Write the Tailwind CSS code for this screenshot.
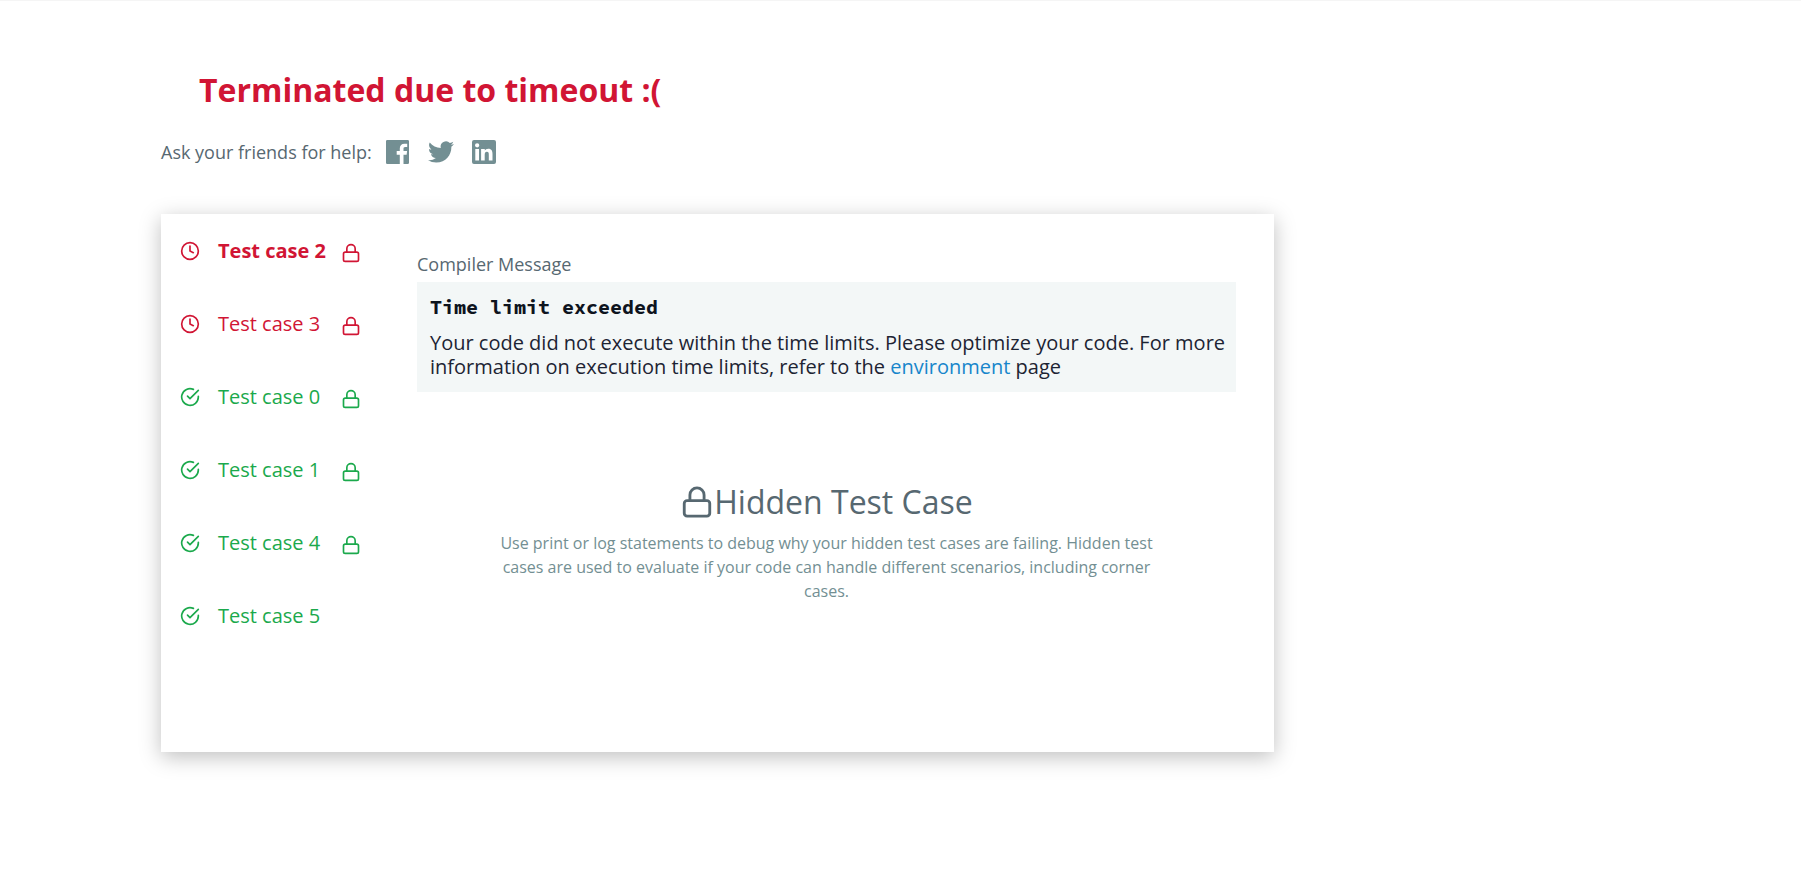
<!DOCTYPE html>
<html lang="en">
<head>
<meta charset="utf-8">
<meta name="viewport" content="width=device-width, initial-scale=1">
<title>Submission result</title>
<script src="https://cdn.jsdelivr.net/npm/@tailwindcss/browser@4"></script>
</head>
<body class="min-h-screen border-t border-[#f5f5f5] bg-white font-['Open_Sans','Noto_Sans',sans-serif] text-xl text-[#1d2433]">
<svg class="hidden" aria-hidden="true">
  <symbol id="clock" viewBox="0 0 24 24"><circle cx="12" cy="12" r="10"/><path d="M12 6v6l4 2"/></symbol>
  <symbol id="check" viewBox="0 0 24 24"><path d="M22 11.08V12a10 10 0 1 1-5.93-9.14"/><path d="M22 4 12 14.01l-3-3"/></symbol>
  <symbol id="lock" viewBox="0 0 24 24"><rect x="3" y="11" width="18" height="11" rx="2"/><path d="M7 11V7a5 5 0 0 1 10 0v4"/></symbol>
</svg>
<main class="max-w-[1274px] pl-[161px] pt-16">
  <h1 class="pl-[38px] text-[32px] leading-[50px] font-bold text-[#d11534]">Terminated due to timeout :(</h1>
  <div class="mt-[21px] flex h-8 items-center text-lg text-[#576871]">
    <span>Ask your friends for help:</span>
    <div class="ml-[14px] flex items-center gap-[18px] text-[#738f93]">
      <a href="#" aria-label="Share on Facebook"><svg class="size-6" viewBox="0 0 24 24" fill="currentColor"><path d="M1.3 0h20.4Q23 0 23 1.3v21.4Q23 24 21.700 24h-4.200v-9.300h3.100l.5-3.600h-3.600V8.800c0-1.100.3-1.800 1.800-1.800h1.900V3.800c-.4 0-1.500-.1-2.800-.1-2.800 0-4.600 1.700-4.600 4.700v2.700h-3.100v3.600h3.100V24H1.300Q0 24 0 22.700V1.300Q0 0 1.300 0z"/></svg></a>
      <a href="#" aria-label="Share on Twitter"><svg class="size-[26px]" viewBox="0 0 24 24" fill="currentColor"><path d="M23.950 4.570a10 10 0 0 1-2.820.77 4.960 4.960 0 0 0 2.160-2.720c-.95.55-2 .95-3.120 1.180a4.920 4.920 0 0 0-8.390 4.480C7.690 8.090 4.070 6.130 1.640 3.160a4.820 4.820 0 0 0-.67 2.480c0 1.710.87 3.210 2.190 4.100a4.900 4.900 0 0 1-2.230-.62v.06a4.920 4.920 0 0 0 3.950 4.830 5 5 0 0 1-2.210.08 4.940 4.940 0 0 0 4.600 3.420A9.870 9.870 0 0 1 0 19.540a14 14 0 0 0 7.550 2.210c9.050 0 14-7.500 14-13.980 0-.21 0-.42-.02-.63a9.940 9.940 0 0 0 2.420-2.570z"/></svg></a>
      <a href="#" aria-label="Share on LinkedIn"><svg class="size-6" viewBox="0 0 24 24" fill="currentColor" fill-rule="evenodd"><path d="M2 0h20a2 2 0 0 1 2 2v20a2 2 0 0 1-2 2H2a2 2 0 0 1-2-2V2a2 2 0 0 1 2-2zM3.300 9v11.500h3.700V9zM5.150 3.200a2.150 2.150 0 1 0 0 4.300 2.150 2.150 0 0 0 0-4.300zM9.100 9v11.500h3.600v-5.700c0-1.500.3-3 2.200-3s1.900 1.800 1.900 3.100v5.600h3.700v-6.300c0-3.100-.7-5.500-4.300-5.500-1.700 0-2.900.9-3.400 1.900V9z"/></svg></a>
    </div>
  </div>
  <section class="mt-[46px] flex min-h-[538px] bg-white shadow-[0_5px_20px_rgba(0,0,0,0.25)]">
    <nav class="w-[256px] shrink-0 fill-none stroke-current stroke-2 [stroke-linecap:round] [stroke-linejoin:round]">
      <ul>
        <li><button class="flex h-[73px] items-center pl-[19px] text-left font-bold text-[#d11534]"><svg class="size-5"><use href="#clock"/></svg><span class="ml-[18px] w-[123px]">Test case 2</span><svg class="mt-1 size-5"><use href="#lock"/></svg></button></li>
        <li><button class="flex h-[73px] items-center pl-[19px] text-left text-[#d11534]"><svg class="size-5"><use href="#clock"/></svg><span class="ml-[18px] w-[123px]">Test case 3</span><svg class="mt-1 size-5"><use href="#lock"/></svg></button></li>
        <li><button class="flex h-[73px] items-center pl-[19px] text-left text-[#1ba94c]"><svg class="size-5"><use href="#check"/></svg><span class="ml-[18px] w-[123px]">Test case 0</span><svg class="mt-1 size-5"><use href="#lock"/></svg></button></li>
        <li><button class="flex h-[73px] items-center pl-[19px] text-left text-[#1ba94c]"><svg class="size-5"><use href="#check"/></svg><span class="ml-[18px] w-[123px]">Test case 1</span><svg class="mt-1 size-5"><use href="#lock"/></svg></button></li>
        <li><button class="flex h-[73px] items-center pl-[19px] text-left text-[#1ba94c]"><svg class="size-5"><use href="#check"/></svg><span class="ml-[18px] w-[123px]">Test case 4</span><svg class="mt-1 size-5"><use href="#lock"/></svg></button></li>
        <li><button class="flex h-[73px] items-center pl-[19px] text-left text-[#1ba94c]"><svg class="size-5"><use href="#check"/></svg><span class="ml-[18px] w-[123px]">Test case 5</span></button></li>
      </ul>
    </nav>
    <div class="min-w-0 flex-1 pt-[38px] pr-[38px]">
      <h2 class="text-lg leading-6 text-[#576871]">Compiler Message</h2>
      <div class="mt-[6px] bg-[#f3f7f7] py-[13px] pr-2 pl-[13px]">
        <p class="font-['Source_Code_Pro','Noto_Sans_Mono','DejaVu_Sans_Mono',monospace] leading-6 font-bold text-[#0e141e]">Time limit exceeded</p>
        <p class="mt-3 leading-6">Your code did not execute within the time limits. Please optimize your code. For more information on execution time limits, refer to the <a href="#" class="text-[#1786cb]">environment</a> page</p>
      </div>
      <div class="mt-[85px] text-center">
        <h3 class="flex items-center justify-center text-[32px] leading-[50px] text-[#576871]"><svg class="size-[34px] shrink-0 fill-none stroke-current stroke-2 [stroke-linecap:round] [stroke-linejoin:round]"><use href="#lock"/></svg>Hidden Test Case</h3>
        <p class="mx-auto mt-1 max-w-[676px] text-base leading-6 text-[#738f93]">Use print or log statements to debug why your hidden test cases are failing. Hidden test cases are used to evaluate if your code can handle different scenarios, including corner cases.</p>
      </div>
    </div>
  </section>
</main>
</body>
</html>
